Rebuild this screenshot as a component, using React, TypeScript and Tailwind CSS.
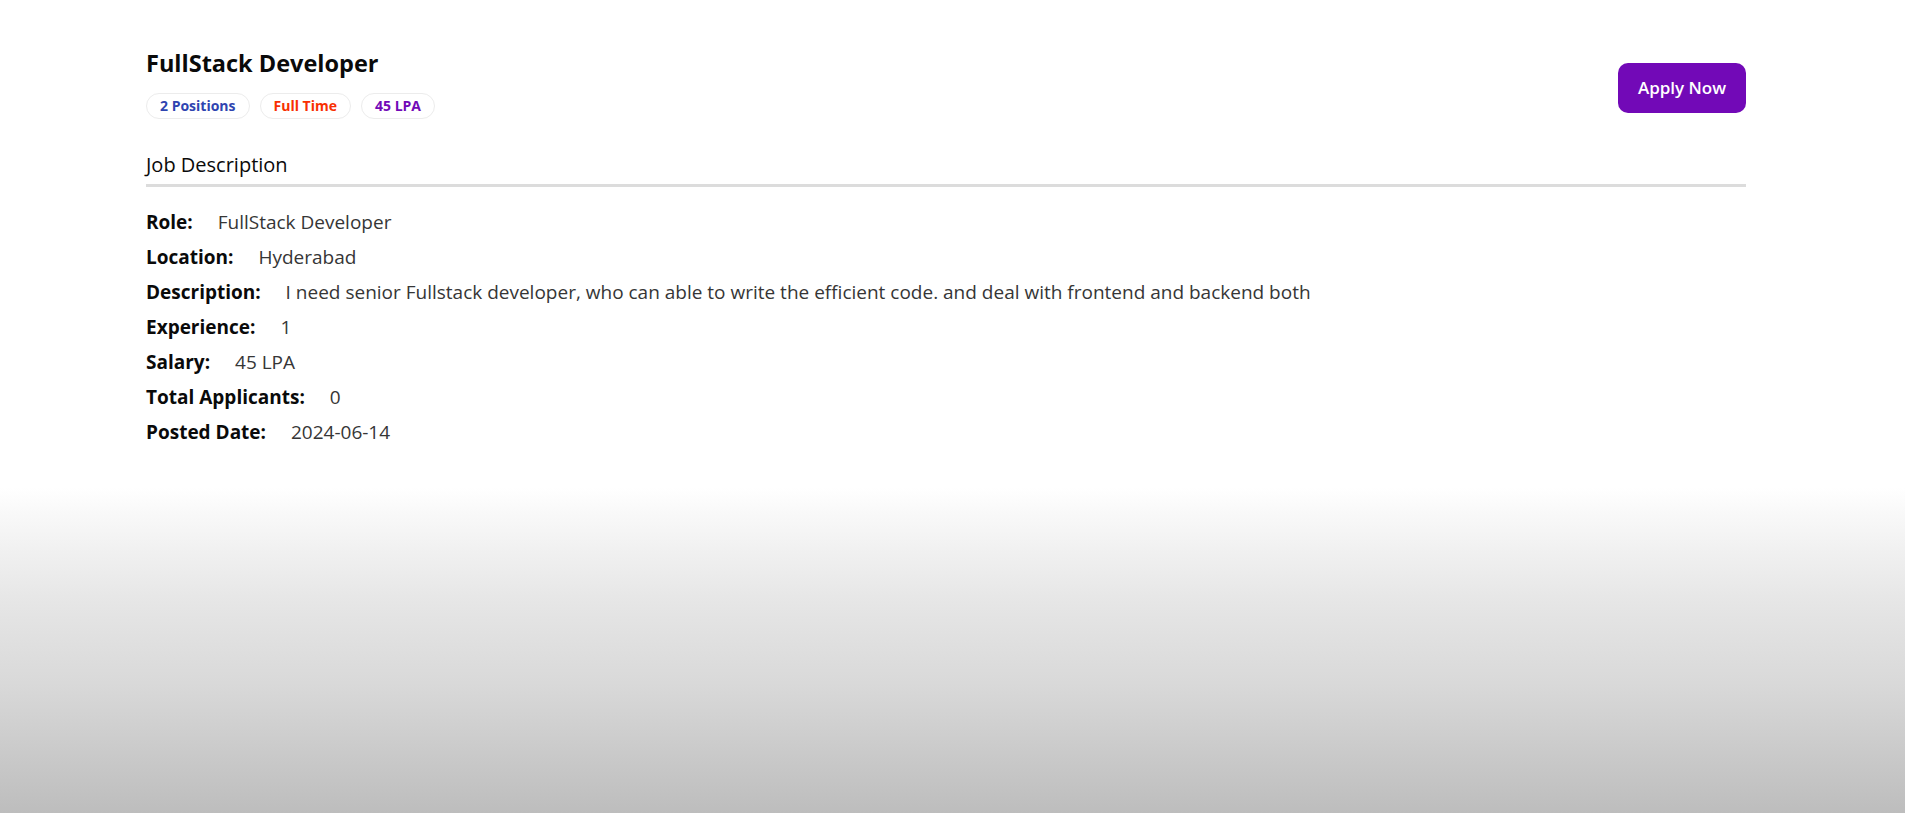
import React from 'react';

const details: { label: string; value: string }[] = [
  { label: 'Role:', value: 'FullStack Developer' },
  { label: 'Location:', value: 'Hyderabad' },
  {
    label: 'Description:',
    value:
      'I need senior Fullstack developer, who can able to write the efficient code. and deal with frontend and backend both',
  },
  { label: 'Experience:', value: '1' },
  { label: 'Salary:', value: '45 LPA' },
  { label: 'Total Applicants:', value: '0' },
  { label: 'Posted Date:', value: '2024-06-14' },
];

const JobDescription: React.FC = () => {
  return (
    <div className="min-h-screen pr-[13px] text-[#0a0a0a] font-['Open_Sans','Noto_Sans',sans-serif] bg-[linear-gradient(to_bottom,#ffffff_0%,#ffffff_60%,#f9f9f9_63%,#f0f0f0_68%,#e6e6e6_74%,#d9d9d9_84%,#cbcbcb_92%,#bdbdbd_100%)]">
      <div className="max-w-[1600px] mx-auto pt-[46px]">
        {/* Header */}
        <div className="flex items-start justify-between">
          <div>
            <h1 className="text-[23.5px] leading-[35px] font-bold">FullStack Developer</h1>
            <div className="flex items-center gap-[10px] mt-[12px]">
              <span className="rounded-full border border-[#ececec] px-[13px] py-[2px] text-[14px] leading-[20px] font-bold text-[#2f44b0]">
                2 Positions
              </span>
              <span className="rounded-full border border-[#ececec] px-[13px] py-[2px] text-[14px] leading-[20px] font-bold text-[#F83002]">
                Full Time
              </span>
              <span className="rounded-full border border-[#ececec] px-[13px] py-[2px] text-[14px] leading-[20px] font-bold text-[#7209b7]">
                45 LPA
              </span>
            </div>
          </div>
          <button className="mt-[17px] h-[50px] w-[128px] flex items-center justify-center rounded-[10px] bg-[#7209b7] text-white text-[17px] font-semibold">
            Apply Now
          </button>
        </div>

        {/* Job Description */}
        <h2 className="mt-[31px] pb-[4px] border-b-[3px] border-[#dcdcdc] text-[20px] leading-[30px] font-medium">
          Job Description
        </h2>

        <div className="mt-[20px] flex flex-col gap-[5px]">
          {details.map((d) => (
            <p key={d.label} className="text-[19px] leading-[30px] font-bold">
              {d.label} <span className="pl-[20px] font-normal text-[#363636]">{d.value}</span>
            </p>
          ))}
        </div>
      </div>
    </div>
  );
};

export default function App() {
  return <JobDescription />;
}
